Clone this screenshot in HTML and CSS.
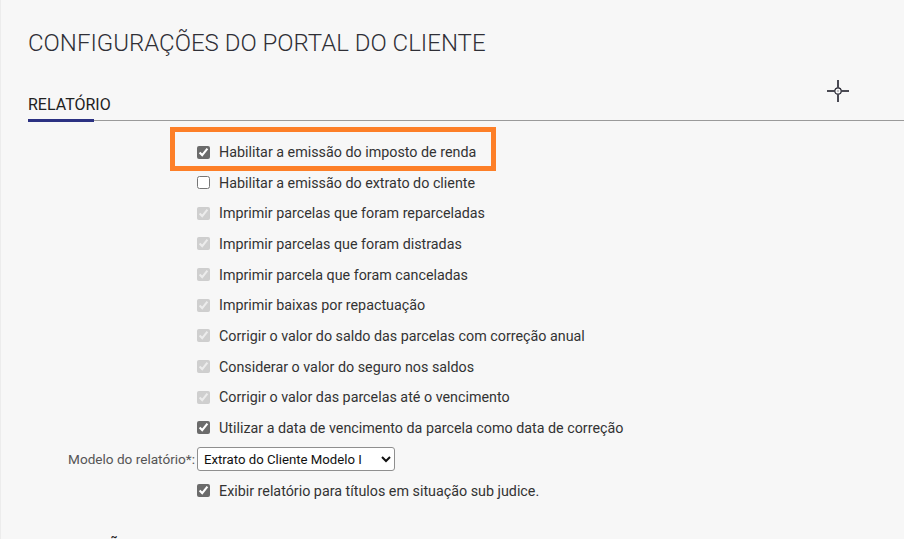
FILE: index.html
```html
<!DOCTYPE html>
<html lang="pt-BR">
<head>
  <meta charset="UTF-8">
  <meta name="viewport" content="width=device-width, initial-scale=1.0">
  <title>Configurações do Portal do Cliente</title>
  <link rel="stylesheet" href="styles.css">
</head>
<body>
  <div class="page">
    <h1 class="page-title">CONFIGURAÇÕES DO PORTAL DO CLIENTE</h1>

    <div class="tabs">
      <span class="tab active">RELATÓRIO</span>
    </div>

    <form class="settings">
      <label class="check-row"><input type="checkbox" checked> Habilitar a emissão do imposto de renda</label>
      <label class="check-row"><input type="checkbox"> Habilitar a emissão do extrato do cliente</label>
      <label class="check-row"><input type="checkbox" checked disabled> Imprimir parcelas que foram reparceladas</label>
      <label class="check-row"><input type="checkbox" checked disabled> Imprimir parcelas que foram distradas</label>
      <label class="check-row"><input type="checkbox" checked disabled> Imprimir parcela que foram canceladas</label>
      <label class="check-row"><input type="checkbox" checked disabled> Imprimir baixas por repactuação</label>
      <label class="check-row"><input type="checkbox" checked disabled> Corrigir o valor do saldo das parcelas com correção anual</label>
      <label class="check-row"><input type="checkbox" checked disabled> Considerar o valor do seguro nos saldos</label>
      <label class="check-row"><input type="checkbox" checked disabled> Corrigir o valor das parcelas até o vencimento</label>
      <label class="check-row"><input type="checkbox" checked> Utilizar a data de vencimento da parcela como data de correção</label>

      <label class="field-label" for="modelo">Modelo do relatório*:</label>
      <div class="field-row">
        <select id="modelo" class="field-select">
          <option>Extrato do Cliente Modelo I</option>
          <option>Extrato do Cliente Modelo II</option>
        </select>
      </div>

      <label class="check-row"><input type="checkbox" checked> Exibir relatório para títulos em situação sub judice.</label>
    </form>

    <div class="tabs next">
      <span class="tab">NOTIFICAÇÕES</span>
    </div>

    <!-- destaque da captura -->
    <div class="highlight"></div>

    <svg class="cursor" width="22" height="22" viewBox="0 0 22 22">
      <g stroke="#1e1e2a" stroke-width="1.6" fill="none">
        <line x1="0" y1="11" x2="7.5" y2="11"/>
        <line x1="14.5" y1="11" x2="22" y2="11"/>
        <line x1="11" y1="0" x2="11" y2="7.5"/>
        <line x1="11" y1="14.5" x2="11" y2="22"/>
        <circle cx="11" cy="11" r="3.2" stroke-width="1.2"/>
      </g>
      <rect x="10.5" y="10.5" width="1" height="1" fill="#1e1e2a"/>
    </svg>
  </div>
</body>
</html>
```

FILE: styles.css
```css
html, body {
  height: 100%;
}

body {
  margin: 0;
  background-color: #f7f7f7;
  font-family: 'Roboto', 'Liberation Sans', sans-serif;
  color: #333;
  overflow: hidden;
}

.page {
  position: relative;
  min-height: 100%;
  padding-top: 31px;
  border-left: 1px solid #ececec;
  box-sizing: border-box;
}

.page-title {
  margin: 0 0 0 27px;
  font-size: 24px;
  line-height: 24px;
  font-weight: 300;
  color: #2f2f36;
}

.tabs {
  margin: 41.5px 0 0 27px;
  border-bottom: 1px solid #9a9a9a;
  display: flex;
}

.tab {
  position: relative;
  font-size: 16px;
  line-height: 16px;
  padding: 0 0 7.5px;
  color: #222;
}

.tab.active::after {
  content: '';
  position: absolute;
  left: 0;
  bottom: -2px;
  width: 66px;
  height: 3px;
  background-color: #2b3182;
}

.tabs.next {
  margin-top: 32px;
  border-bottom: none;
}

.settings {
  display: grid;
  grid-template-columns: 194px 1fr;
  column-gap: 2px;
  padding-top: 15.7px;
  font-size: 14.3px;
}

.check-row {
  grid-column: 2;
  display: flex;
  align-items: center;
  height: 30.67px;
  color: #333;
  cursor: pointer;
}

.check-row input {
  width: 13px;
  height: 13px;
  margin: 0 9px 0 0;
  accent-color: #6b6b6b;
}

.field-label {
  grid-column: 1;
  display: flex;
  align-items: center;
  justify-content: flex-end;
  height: 32px;
  font-size: 13.6px;
  color: #555;
}

.field-row {
  grid-column: 2;
  display: flex;
  align-items: center;
  height: 32px;
}

.field-select {
  width: 198px;
  height: 24px;
  font-family: 'Roboto', 'Liberation Sans', sans-serif;
  font-size: 13.2px;
  color: #111;
  background-color: #fff;
  border: 1px solid #8f8f8f;
  border-radius: 3px;
  padding: 0 2px;
}

.highlight {
  position: absolute;
  left: 169px;
  top: 127px;
  width: 326px;
  height: 44px;
  border: 5px solid #fd7f28;
  box-sizing: border-box;
  pointer-events: none;
}

.cursor {
  position: absolute;
  left: 826px;
  top: 80px;
}
```
